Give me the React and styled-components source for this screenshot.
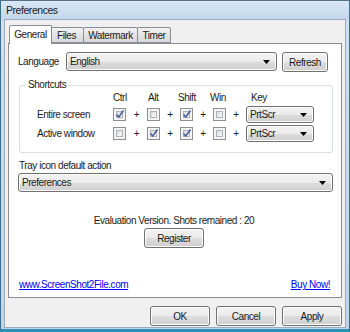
import styled, { createGlobalStyle } from "styled-components";

const GlobalStyle = createGlobalStyle`
  html, body {
    margin: 0;
    padding: 0;
    background: #ffffff;
  }
  * {
    box-sizing: border-box;
  }
`;

const Window = styled.div`
  width: 350px;
  height: 332px;
  display: flex;
  flex-direction: column;
  background: linear-gradient(#cfe0f2, #bfd4ea);
  border-left: 1px solid #3d6f8c;
  border-right: 1px solid #3d6f8c;
  border-top: 1px solid #56708a;
  border-bottom: 3px solid #2792b4;
  font-family: "Liberation Sans", Arial, sans-serif;
  font-size: 10px;
  letter-spacing: -0.45px;
  color: #1a1a1a;
`;

const TitleBar = styled.div`
  height: 18px;
  display: flex;
  align-items: center;
  padding-left: 5px;
  background: linear-gradient(#dae7f5, #c3d7ed);
  font-size: 10.5px;
`;

const Client = styled.div`
  flex: 1;
  margin: 0 3px 1px 3px;
  background: #f0f0f0;
  border: 1px solid #9aabbf;
  padding: 5px 3px 0 3px;
  display: flex;
  flex-direction: column;
`;

const TabStrip = styled.div`
  display: flex;
  align-items: flex-end;
  height: 18px;
  padding-left: 3px;
`;

const Tab = styled.div`
  position: relative;
  width: ${(p) => p.$w}px;
  height: ${(p) => (p.$active ? 19 : 16)}px;
  margin-left: ${(p) => (p.$active ? -2 : -1)}px;
  margin-right: ${(p) => (p.$active ? -2 : 0)}px;
  margin-bottom: ${(p) => (p.$active ? -1 : 0)}px;
  z-index: ${(p) => (p.$active ? 2 : 1)};
  border: 1px solid #898c95;
  border-bottom: ${(p) => (p.$active ? "none" : "1px solid #898c95")};
  border-radius: 2px 2px 0 0;
  background: ${(p) =>
    p.$active ? "#ffffff" : "linear-gradient(#f3f3f3, #e4e4e4 50%, #d9d9d9)"};
  display: flex;
  align-items: center;
  justify-content: center;
  padding-bottom: ${(p) => (p.$active ? 2 : 0)}px;
`;

const Panel = styled.div`
  height: 255px;
  background: #ffffff;
  border: 1px solid #898c95;
  display: flex;
  flex-direction: column;
  padding: 8px 11px 0 9px;
`;

const Row = styled.div`
  display: flex;
  align-items: flex-start;
`;

const Label = styled.div`
  width: ${(p) => (p.$w ? `${p.$w}px` : "auto")};
  line-height: 12px;
  padding-top: ${(p) => p.$pt || 0}px;
  margin-left: ${(p) => p.$ml || 0}px;
  margin-top: ${(p) => p.$mt || 0}px;
  white-space: nowrap;
`;

const Button = styled.div`
  width: ${(p) => p.$w}px;
  height: 20px;
  margin-left: ${(p) => p.$ml || 0}px;
  margin-top: ${(p) => p.$mt || 0}px;
  border: 1px solid #707070;
  border-radius: 3px;
  background: linear-gradient(#f2f2f2, #ebebeb 50%, #dddddd 51%, #cfcfcf);
  box-shadow: inset 0 0 0 1px #fcfcfc;
  display: flex;
  align-items: center;
  justify-content: center;
  flex-shrink: 0;
`;

const Dropdown = styled.div`
  width: ${(p) => p.$w}px;
  height: ${(p) => p.$h}px;
  margin-left: ${(p) => p.$ml || 0}px;
  margin-top: ${(p) => p.$mt || 0}px;
  border: 1px solid #707070;
  border-radius: 3px;
  background: linear-gradient(#f2f2f2, #ebebeb 50%, #dddddd 51%, #cfcfcf);
  box-shadow: inset 0 0 0 1px #fcfcfc;
  display: flex;
  align-items: center;
  justify-content: space-between;
  padding: 0 6px 0 3px;
  flex-shrink: 0;
`;

const Arrow = () => (
  <svg width="7" height="4" viewBox="0 0 7 4">
    <path d="M0 0 H7 L3.5 4 Z" fill="#000" />
  </svg>
);

const Group = styled.fieldset`
  margin: 7px 0 0 1px;
  width: 314px;
  padding: 1px 0 10px 0;
  border: 1px solid #d5dfe5;
  border-radius: 3px;
  min-width: 0;
`;

const Legend = styled.legend`
  margin-left: 6px;
  padding: 0 2px;
  line-height: 12px;
`;

const ShortcutGrid = styled.div`
  display: grid;
  grid-template-columns: 76px 13px 21px 13px 20px 13px 20px 13px 20px 68px;
  grid-template-rows: 12px 17px 17px;
  row-gap: 2px;
  padding-left: 17px;
  align-items: center;
`;

const Head = styled.div`
  padding-left: ${(p) => p.$pl || 0}px;
  margin-left: ${(p) => p.$ml || 0}px;
  white-space: nowrap;
  line-height: 12px;
`;

const Plus = styled.div`
  text-align: center;
  line-height: 12px;
`;

const Box = styled.div`
  width: 13px;
  height: 13px;
  border: 1px solid #8e8f8f;
  background: #f4f4f4;
  padding: 2px;
  display: flex;
`;

const BoxInner = styled.div`
  flex: 1;
  border: 1px solid #aeb3b9;
  background: linear-gradient(135deg, #dcdcdc, #fbfbfb);
  position: relative;
`;

const Check = styled.svg`
  position: absolute;
  left: -2px;
  top: -3px;
`;

const Checkbox = ({ checked }) => (
  <Box>
    <BoxInner>
      {checked && (
        <Check width="10" height="10" viewBox="0 0 10 10">
          <path
            d="M1.5 5.5 L3.8 8 L8.5 1.5"
            fill="none"
            stroke="#4a5fa0"
            strokeWidth="1.6"
          />
        </Check>
      )}
    </BoxInner>
  </Box>
);

const Center = styled.div`
  display: flex;
  flex-direction: column;
  align-items: center;
  margin-top: ${(p) => p.$mt || 0}px;
`;

const Links = styled.div`
  display: flex;
  justify-content: space-between;
  margin-top: 31px;
  padding-left: 1px;
`;

const Link = styled.a`
  color: #0000ff;
  text-decoration: underline;
  line-height: 12px;
`;

const Footer = styled.div`
  display: flex;
  justify-content: flex-end;
  gap: 6px;
  margin-top: 8px;
`;

const tabs = [
  { name: "General", w: 43, active: true },
  { name: "Files", w: 35 },
  { name: "Watermark", w: 55 },
  { name: "Timer", w: 34 },
];

const shortcuts = [
  { label: "Entire screen", keys: [true, false, true, false] },
  { label: "Active window", keys: [false, true, true, false] },
];

export default function App() {
  return (
    <>
      <GlobalStyle />
      <Window>
        <TitleBar>Preferences</TitleBar>
        <Client>
          <TabStrip>
            {tabs.map((t) => (
              <Tab key={t.name} $w={t.w} $active={t.active}>
                {t.name}
              </Tab>
            ))}
          </TabStrip>
          <Panel>
            <Row>
              <Label $w={48} $pt={4}>
                Language
              </Label>
              <Dropdown $w={211} $h={19}>
                <span>English</span>
                <Arrow />
              </Dropdown>
              <Button $w={46} $ml={5}>
                Refresh
              </Button>
            </Row>

            <Group>
              <Legend>Shortcuts</Legend>
              <ShortcutGrid>
                <div />
                <Head>Ctrl</Head>
                <div />
                <Head $pl={1}>Alt</Head>
                <div />
                <Head $ml={-2}>Shift</Head>
                <div />
                <Head $ml={-3}>Win</Head>
                <div />
                <Head $pl={5}>Key</Head>
                {shortcuts.map((s) => [
                  <Label key={s.label}>{s.label}</Label>,
                  ...s.keys.flatMap((k, i) => [
                    <Checkbox key={`${s.label}-c${i}`} checked={k} />,
                    <Plus key={`${s.label}-p${i}`}>+</Plus>,
                  ]),
                  <Dropdown key={`${s.label}-k`} $w={68} $h={17}>
                    <span>PrtScr</span>
                    <Arrow />
                  </Dropdown>,
                ])}
              </ShortcutGrid>
            </Group>

            <Label $ml={1} $mt={7}>
              Tray icon default action
            </Label>
            <Dropdown $w={315} $h={19} $mt={1}>
              <span>Preferences</span>
              <Arrow />
            </Dropdown>

            <Center $mt={23}>
              <Label>Evaluation Version. Shots remained : 20</Label>
              <Button $w={60} $mt={1}>
                Register
              </Button>
            </Center>

            <Links>
              <Link>www.ScreenShot2File.com</Link>
              <Link>Buy Now!</Link>
            </Links>
          </Panel>
          <Footer>
            <Button $w={60}>OK</Button>
            <Button $w={60}>Cancel</Button>
            <Button $w={60}>Apply</Button>
          </Footer>
        </Client>
      </Window>
    </>
  );
}
